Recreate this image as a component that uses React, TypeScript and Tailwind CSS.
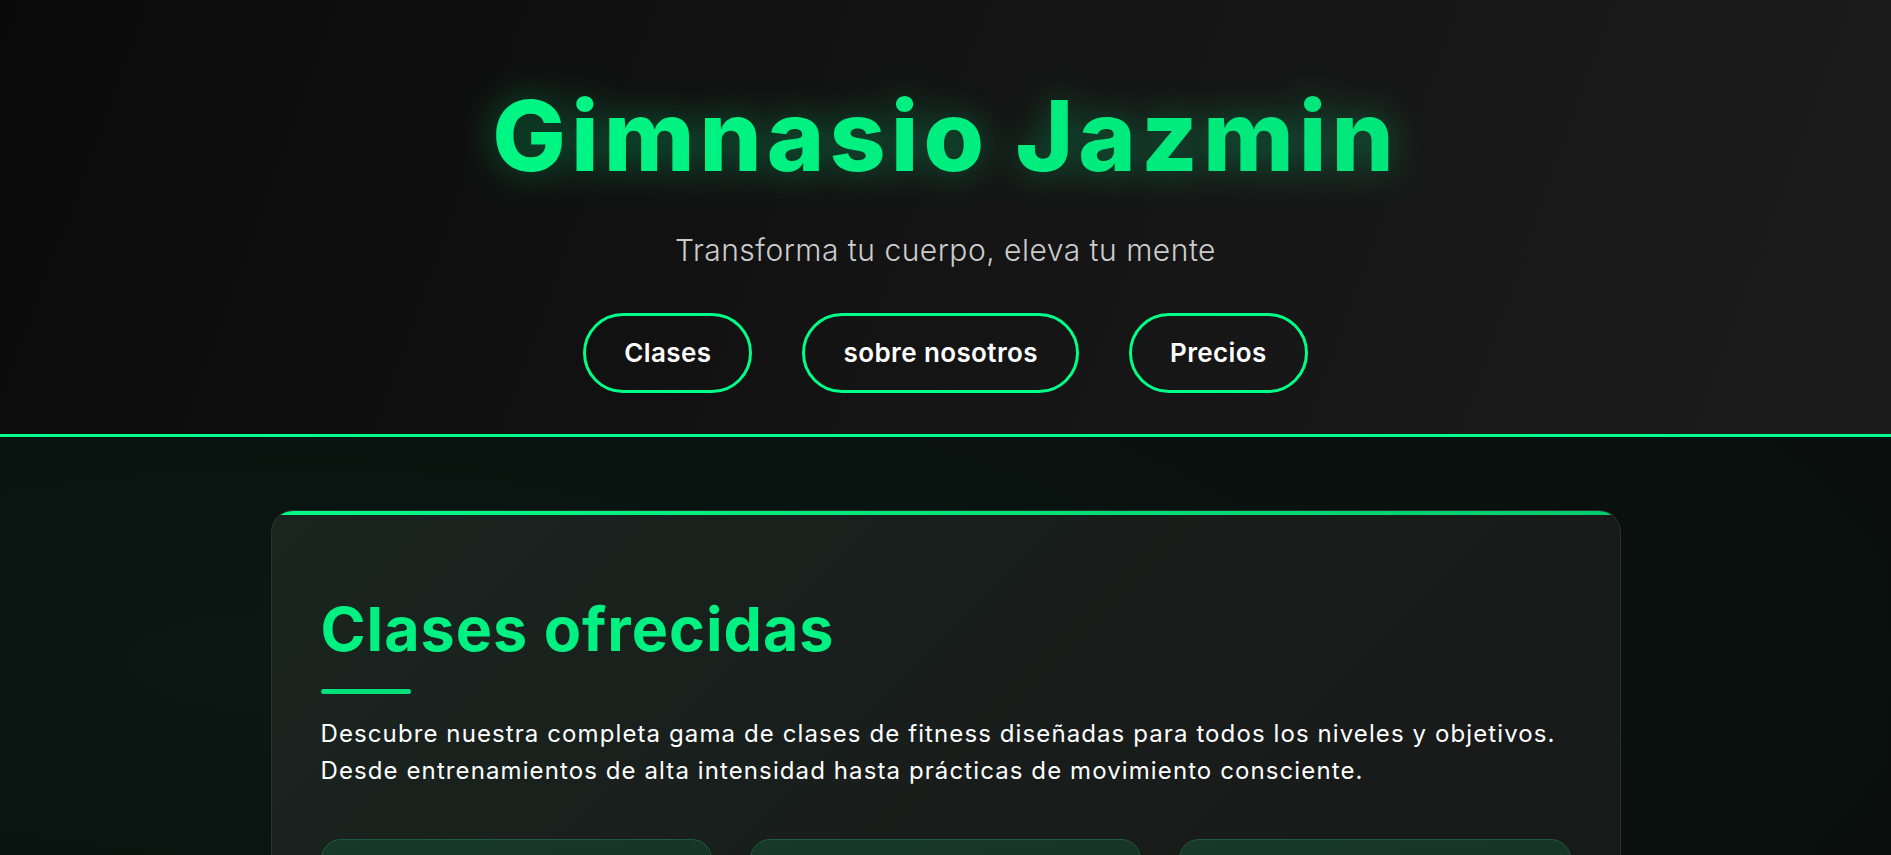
import React from 'react';

const navLinks = ['Clases', 'sobre nosotros', 'Precios'];

const classCards = ['hiit', 'yoga', 'fuerza'];

const App: React.FC = () => {
  return (
    <div className="min-h-screen bg-[#09140f] font-['Inter','Liberation_Sans',sans-serif] text-white">
      {/* Header */}
      <header className="bg-[linear-gradient(110deg,#0a0a0a_0%,#131313_45%,#1c1c1c_100%)] border-b-[3px] border-[#00ff88] pt-[77px] pb-[41px] text-center">
        <h1 className="text-[98px] leading-[1.2] font-extrabold tracking-[5px] bg-[linear-gradient(90deg,#00ff88,#00dd77)] bg-clip-text text-transparent drop-shadow-[0_0_18px_rgba(0,255,136,0.35)]">
          Gimnasio Jazmin
        </h1>
        <p className="mt-[33px] text-[30px] font-light tracking-[0.5px] text-[#cccccc]">Transforma tu cuerpo, eleva tu mente</p>
        <nav className="mt-[40px] flex justify-center gap-[50px]">
          {navLinks.map((link) => (
            <a
              key={link}
              href="#"
              className="rounded-full border-[3px] border-[#00ff88] px-[38px] py-[17px] text-[26px] leading-[40px] font-semibold tracking-[0.4px] text-white"
            >
              {link}
            </a>
          ))}
        </nav>
      </header>

      {/* Main */}
      <main className="bg-[radial-gradient(ellipse_at_15%_30%,#0a1712_0%,#09130f_40%,#0a0c0c_100%)] pt-[73px] pb-20">
        <section className="relative mx-auto w-[1350px] overflow-hidden rounded-[22px] border border-[#2c302e] bg-[linear-gradient(135deg,#1a2520_0%,#181c1a_55%,#181919_100%)] px-[49px] pt-[82px] pb-[50px]">
          <div className="absolute left-0 right-0 top-0 h-[4px] bg-[linear-gradient(90deg,#00ff88,#00cc6a)]" />
          <h2 className="text-[61px] leading-[1.2] font-bold tracking-[1px] text-[#00f082]">Clases ofrecidas</h2>
          <div className="mt-[23px] h-[5px] w-[90px] rounded-full bg-[#00e07a]" />
          <p className="mt-[21px] text-[24px] leading-[37px] tracking-[1.1px] text-white">
            Descubre nuestra completa gama de clases de fitness diseñadas para todos los niveles y objetivos.
            <br />
            Desde entrenamientos de alta intensidad hasta prácticas de movimiento consciente.
          </p>
          <div className="mt-[50px] grid grid-cols-3 gap-[38px]">
            {classCards.map((id) => (
              <div
                key={id}
                className="h-[220px] rounded-[20px] border border-[#1d5b3c] bg-[linear-gradient(160deg,#17382a,#162f24)]"
              />
            ))}
          </div>
        </section>
      </main>
    </div>
  );
};

export default App;
